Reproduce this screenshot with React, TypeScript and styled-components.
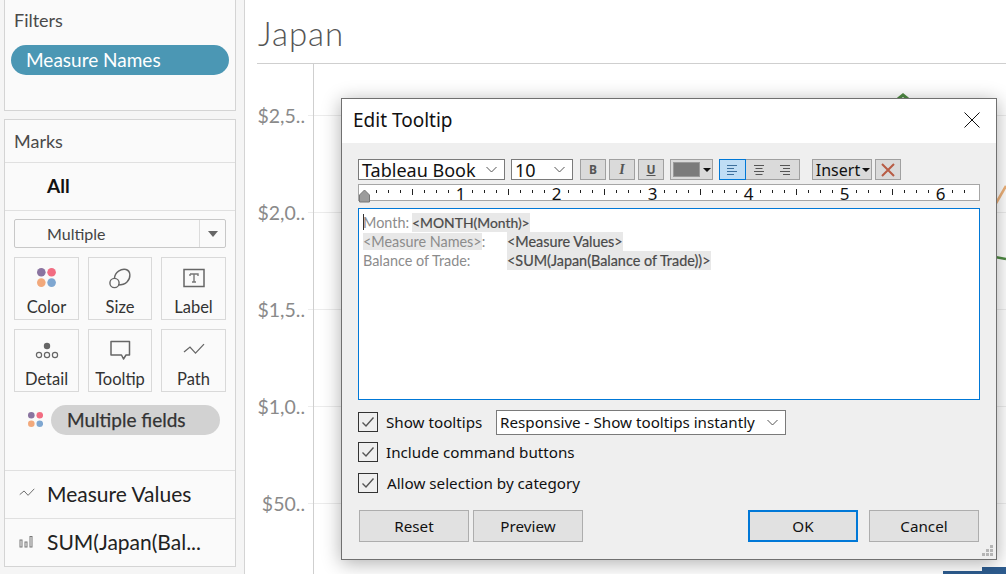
import React from 'react';
import styled, { createGlobalStyle } from 'styled-components';

const Global = createGlobalStyle`
  html, body {
    margin: 0;
    width: 1006px;
    height: 574px;
    overflow: hidden;
    background: #fff;
  }
  * { box-sizing: border-box; }
`;

const SANS = `Lato, 'Open Sans', sans-serif`;
const UI = `'Noto Sans', 'Open Sans', sans-serif`;

const Page = styled.div`
  position: relative;
  display: flex;
  width: 1006px;
  height: 574px;
  overflow: hidden;
  font-family: ${SANS};
`;

const Sidebar = styled.aside`
  width: 245px;
  flex: none;
  display: flex;
  flex-direction: column;
  gap: 8px;
  padding: 0 8px 0 4px;
  background: #f5f5f5;
  border-right: 1px solid #d4d4d4;
`;

const Card = styled.section<{ $height: number }>`
  height: ${p => p.$height}px;
  flex: none;
  display: flex;
  flex-direction: column;
  background: #fafafa;
  border: 1px solid #d4d4d4;
`;

const FilterCard = styled(Card)`
  margin-top: -1px;
  border-top: none;
  padding: 10px 6px 0 6px;
`;

const CardTitle = styled.div`
  font-size: 18px;
  line-height: 22px;
  color: #4a4a4a;
`;

const FilterTitle = styled(CardTitle)`
  padding-left: 3px;
  margin-bottom: 14px;
`;

const FilterPill = styled.div`
  height: 30px;
  border-radius: 15px;
  background: #4b97b4;
  color: #fff;
  font-size: 19px;
  line-height: 30px;
  padding-left: 15px;
`;

const MarksHeader = styled.div`
  height: 43px;
  padding: 10px 0 0 9px;
  border-bottom: 1px solid #e0e0e0;
`;

const AllRow = styled.div`
  height: 48px;
  padding-left: 42px;
  border-bottom: 1px solid #e0e0e0;
  font-size: 19px;
  font-weight: 700;
  line-height: 46px;
  color: #111;
`;

const MarkSelect = styled.div`
  display: flex;
  height: 29px;
  margin: 8px 9px 9px 9px;
  background: #fafafa;
  border: 1px solid #c8c8c8;
  border-radius: 2px;
`;

const MarkSelectText = styled.div`
  flex: 1;
  padding-left: 32px;
  font-size: 16px;
  line-height: 27px;
  color: #444;
`;

const MarkSelectArrow = styled.div`
  width: 26px;
  display: flex;
  align-items: center;
  justify-content: center;
  border-left: 1px solid #dcdcdc;

  &::after {
    content: '';
    border-left: 5px solid transparent;
    border-right: 5px solid transparent;
    border-top: 6px solid #666;
  }
`;

const TileGrid = styled.div`
  display: grid;
  grid-template-columns: 65px 64px 65px;
  grid-auto-rows: 63px;
  column-gap: 9px;
  row-gap: 9px;
  margin-left: 9px;
`;

const Tile = styled.div`
  display: flex;
  flex-direction: column;
  align-items: center;
  border: 1px solid #d9d9d9;
  color: #333;
  font-size: 16.5px;
`;

const TileIcon = styled.div<{ $top: number }>`
  height: 38px;
  padding-top: ${p => p.$top}px;
  display: flex;
  justify-content: center;
`;

const TileLabel = styled.div`
  line-height: 22px;
`;

const FieldRow = styled.div`
  display: flex;
  align-items: center;
  height: 30px;
  margin: 13px 0 35px 0;
`;

const FieldDots = styled.div`
  width: 46px;
  padding-left: 23px;
  display: flex;
`;

const FieldPill = styled.div`
  width: 169px;
  height: 30px;
  border-radius: 15px;
  background: #d2d2d2;
  color: #333;
  font-size: 19px;
  line-height: 30px;
  padding-left: 16px;
  -webkit-text-stroke: 0.25px #333;
`;

const EncodingRow = styled.div`
  display: flex;
  align-items: center;
  height: 48px;
  padding-bottom: 3px;
  border-top: 1px solid #e0e0e0;
  color: #222;
  font-size: 21px;
  white-space: nowrap;
`;

const EncodingIcon = styled.div`
  width: 42px;
  padding-left: 14px;
  display: flex;
`;

const ChartArea = styled.main`
  position: relative;
  flex: 1;
  padding-left: 12px;
  display: flex;
  flex-direction: column;
  background: #fff;
`;

const ChartTitle = styled.h1`
  margin: 0;
  height: 64px;
  flex: none;
  padding-left: 1px;
  border-bottom: 1px solid #cfcfcf;
  font-size: 33px;
  font-weight: 300;
  line-height: 67px;
  letter-spacing: 1px;
  color: #555;
`;

const Plot = styled.div`
  flex: 1;
  display: flex;
`;

const Axis = styled.div`
  width: 57px;
  flex: none;
  padding-top: 3px;
  border-right: 1px solid #cfcfcf;
`;

const AxisRow = styled.div`
  position: relative;
  height: 97px;
  display: flex;
  align-items: center;
  justify-content: flex-end;
  padding-right: 8px;
  color: #8a8a8a;
  font-size: 19.5px;

  &::after {
    content: '';
    position: absolute;
    right: 0;
    top: 48px;
    width: 5px;
    border-top: 1px solid #ececec;
  }
`;

const PlotBody = styled.div`
  flex: 1;
  padding-top: 51px;
`;

const GridLine = styled.div`
  height: 97px;
  border-top: 1px solid #ececec;
`;

const MarksOverlay = styled.svg`
  position: absolute;
  right: 0;
  top: 0;
`;

const Dialog = styled.div`
  position: absolute;
  left: 341px;
  top: 98px;
  width: 656px;
  height: 462px;
  display: flex;
  flex-direction: column;
  background: #efefef;
  border: 1px solid #707070;
  box-shadow: 0 3px 18px rgba(0, 0, 0, 0.32);
  font-family: ${UI};
  color: #111;
`;

const DialogHeader = styled.header`
  height: 44px;
  flex: none;
  display: flex;
  align-items: center;
  justify-content: space-between;
  padding: 0 16px 2px 11px;
  background: #fff;
  font-size: 19px;
`;

const DialogBody = styled.div`
  flex: 1;
  padding: 16px 16px 0 16px;
  display: flex;
  flex-direction: column;
`;

const Toolbar = styled.div`
  display: flex;
  height: 21px;
`;

const ComboBox = styled.div<{ $width: number; $gap?: number; $size?: number }>`
  width: ${p => p.$width}px;
  height: ${p => (p.$size ? 25 : 21)}px;
  margin-right: ${p => p.$gap || 0}px;
  display: flex;
  align-items: center;
  justify-content: space-between;
  padding: 0 7px 0 3px;
  background: #fff;
  border: 1px solid #7a7a7a;
  font-size: ${p => p.$size || 18}px;
  white-space: nowrap;
`;

const ToolButton = styled.div<{ $width?: number; $gap?: number }>`
  width: ${p => p.$width || 26}px;
  height: 21px;
  margin-right: ${p => p.$gap || 0}px;
  display: flex;
  align-items: center;
  justify-content: center;
  background: #dadada;
  border: 1px solid #a0a0a0;
  color: #555;
  font-size: 12px;
  font-weight: 700;
`;

const ItalicMark = styled.span`
  font-family: 'Liberation Serif', serif;
  font-style: italic;
  font-size: 14px;
`;

const UnderlineMark = styled.span`
  text-decoration: underline;
`;

const ColorButton = styled(ToolButton)`
  justify-content: flex-start;
  gap: 3px;
  padding-left: 2px;
`;

const Swatch = styled.span`
  width: 27px;
  height: 15px;
  background: #7b7b7b;
  border: 1px solid #9a9a9a;
`;

const Caret = styled.span`
  border-left: 4px solid transparent;
  border-right: 4px solid transparent;
  border-top: 4px solid #111;
`;

const AlignGroup = styled.div`
  display: flex;
  width: 81px;
  height: 21px;
  margin-right: 12px;
  background: #dadada;
  border: 1px solid #a0a0a0;
`;

const AlignCell = styled.div<{ $active?: boolean }>`
  flex: 1;
  display: flex;
  align-items: center;
  justify-content: center;
  margin: -1px 0;
  background: ${p => (p.$active ? '#bfddf5' : 'transparent')};
  border: 1px solid ${p => (p.$active ? '#0078d7' : 'transparent')};

  &:first-child {
    margin-left: -1px;
  }
`;

const InsertButton = styled(ToolButton)`
  gap: 2px;
  padding-left: 2px;
  color: #111;
  font-size: 16px;
  font-weight: 400;
`;

const RulerBox = styled.div`
  width: 622px;
  height: 17px;
  margin-top: 4px;
  background: #fff;
  border: 1px solid #a6a6a6;
`;

const RulerSvg = styled.svg`
  display: block;
  overflow: visible;
`;

const RulerNumber = styled.text`
  font-family: ${UI};
  font-size: 17px;
  fill: #111;
  text-anchor: middle;
`;

const Editor = styled.div`
  width: 622px;
  height: 192px;
  margin-top: 7px;
  padding: 4px 4px;
  background: #fff;
  border: 1px solid #0078d7;
  font-family: ${SANS};
  font-size: 14.4px;
  line-height: 19px;
  color: #8c8c8c;
`;

const EditorRow = styled.div`
  position: relative;
  display: flex;
  height: 19px;
  white-space: nowrap;
`;

const Cursor = styled.span`
  position: absolute;
  left: 0;
  top: 1px;
  width: 1px;
  height: 16px;
  background: #333;
`;

const EditorLabel = styled.span`
  width: 144px;
  flex: none;
`;

const Highlight = styled.span`
  background: #e8e8e8;
`;

const Token = styled.span`
  background: #e8e8e8;
  color: #4a4a4a;
  -webkit-text-stroke: 0.2px #4a4a4a;
`;

const FirstToken = styled(Token)`
  margin-left: 3px;
  font-size: 13.9px;
`;

const OptionRow = styled.label<{ $top: number }>`
  display: flex;
  align-items: center;
  height: 20px;
  margin-top: ${p => p.$top}px;
  font-size: 15.2px;
`;

const OptionText = styled.span`
  width: 110px;
  flex: none;
  white-space: nowrap;
`;

const CheckBox = styled.span<{ $gap: number }>`
  width: 20px;
  height: 20px;
  flex: none;
  margin-right: ${p => p.$gap}px;
  display: flex;
  align-items: center;
  justify-content: center;
  border: 1px solid #333;
`;

const ButtonRow = styled.div`
  display: flex;
  margin-top: 17px;
  padding-left: 1px;
`;

const DialogButton = styled.div<{ $primary?: boolean; $gap?: number }>`
  width: 110px;
  height: 32px;
  margin-right: ${p => p.$gap || 0}px;
  display: flex;
  align-items: center;
  justify-content: center;
  background: #e1e1e1;
  border: ${p => (p.$primary ? '2px solid #0078d7' : '1px solid #adadad')};
  font-size: 15.2px;
`;

const Grip = styled.svg`
  position: absolute;
  right: 3px;
  bottom: 3px;
`;

const ColorDots = ({ r, gap }: { r: number; gap: number }) => {
  const a = r;
  const b = r + gap;
  return (
    <svg width={b + r} height={b + r}>
      <circle cx={a} cy={a} r={r} fill="#8a74a0" />
      <circle cx={b} cy={a} r={r} fill="#f26d82" />
      <circle cx={a} cy={b} r={r} fill="#f2a97c" />
      <circle cx={b} cy={b} r={r} fill="#7fa7d1" />
    </svg>
  );
};

const SizeIcon = () => (
  <svg width="24" height="24" fill="none" stroke="#666" strokeWidth="1.4">
    <path d="M6.5 11 C7 5 13 1.5 18 2.5 C23 4 23 11 19 15 C16.5 17.5 13 18 10 18" />
    <circle cx="6.5" cy="16" r="4.6" />
  </svg>
);

const LabelIcon = () => (
  <svg width="22" height="20">
    <rect x="1" y="1.5" width="20" height="17" fill="none" stroke="#666" strokeWidth="1.5" />
    <path d="M7 6 H15 V8 M7 6 V8 M11 6 V14 M9 14 H13" fill="none" stroke="#777" strokeWidth="1.4" />
  </svg>
);

const DetailIcon = () => (
  <svg width="26" height="22" fill="none" stroke="#666" strokeWidth="1.2">
    <circle cx="13" cy="6" r="3.2" fill="#666" stroke="none" />
    <circle cx="5" cy="15" r="2.6" />
    <circle cx="13" cy="15" r="2.6" />
    <circle cx="21" cy="15" r="2.6" />
  </svg>
);

const TooltipIcon = () => (
  <svg width="22" height="22" fill="none" stroke="#666" strokeWidth="1.5">
    <path d="M2 1.5 H20.5 V15 H17 L14.5 19 L12.5 15 H2 Z" strokeLinejoin="round" />
  </svg>
);

const PathIcon = ({ size = 22 }: { size?: number }) => (
  <svg width={size} height={size * 0.6} viewBox="0 0 22 13" fill="none" stroke="#666" strokeWidth="1.3">
    <path d="M1 9 L7 4 L12.5 10 L21 1" />
  </svg>
);

const BarIcon = () => (
  <svg width="14" height="13" fill="none" stroke="#777" strokeWidth="1">
    <rect x="1" y="5" width="2" height="7" />
    <rect x="6" y="7" width="2" height="5" />
    <rect x="11" y="1.5" width="2" height="10.5" />
  </svg>
);

const ChevronDown = () => (
  <svg width="11" height="7" viewBox="0 0 11 7" fill="none" stroke="#555" strokeWidth="1">
    <path d="M0.5 1 L5.5 6 L10.5 1" />
  </svg>
);

const AlignIcon = ({ mode }: { mode: 'left' | 'center' | 'right' }) => {
  const lengths = [10, 7, 10, 7];
  return (
    <svg width="11" height="10" stroke={mode === 'left' ? '#3d6f9c' : '#555'} strokeWidth="1">
      {lengths.map((len, i) => {
        const offset = mode === 'left' ? 0 : mode === 'right' ? 10 - len : (10 - len) / 2;
        return <path key={i} d={`M${offset} ${i * 3 + 0.5} h${len}`} />;
      })}
    </svg>
  );
};

const CheckMark = () => (
  <svg width="14" height="12" fill="none" stroke="#555" strokeWidth="1.4">
    <path d="M1.5 6.5 L5 10 L12.5 1.5" />
  </svg>
);

const Ruler = () => {
  const ticks = [];
  for (let i = 0; i < 51; i++) {
    const x = 5.5 + i * 12;
    if (i % 8 === 0) continue;
    if (i % 8 === 4) ticks.push(<path key={i} d={`M${x} 4 v6`} stroke="#222" />);
    else ticks.push(<path key={i} d={`M${x} 5 v3`} stroke="#222" />);
  }
  return (
    <RulerSvg width="620" height="15">
      {ticks}
      {[1, 2, 3, 4, 5, 6].map(n => (
        <RulerNumber key={n} x={5.5 + n * 96} y="15">
          {n}
        </RulerNumber>
      ))}
      <path d="M0.5 10 L5.5 5 L10.5 10 V17 H0.5 Z" fill="#9c9c9c" stroke="#777" />
    </RulerSvg>
  );
};

const AXIS_LABELS = ['$2,5..', '$2,0..', '$1,5..', '$1,0..', '$50..'];

const TILES: { label: string; top: number; icon: React.ReactNode }[] = [
  { label: 'Color', top: 10, icon: <ColorDots r={4.3} gap={10.3} /> },
  { label: 'Size', top: 9, icon: <SizeIcon /> },
  { label: 'Label', top: 10, icon: <LabelIcon /> },
  { label: 'Detail', top: 10, icon: <DetailIcon /> },
  { label: 'Tooltip', top: 10, icon: <TooltipIcon /> },
  { label: 'Path', top: 13, icon: <PathIcon /> },
];

const App = () => (
  <Page>
    <Global />
    <Sidebar>
      <FilterCard $height={112}>
        <FilterTitle>Filters</FilterTitle>
        <FilterPill>Measure Names</FilterPill>
      </FilterCard>
      <Card $height={448}>
        <MarksHeader>
          <CardTitle>Marks</CardTitle>
        </MarksHeader>
        <AllRow>All</AllRow>
        <MarkSelect>
          <MarkSelectText>Multiple</MarkSelectText>
          <MarkSelectArrow />
        </MarkSelect>
        <TileGrid>
          {TILES.map(t => (
            <Tile key={t.label}>
              <TileIcon $top={t.top}>{t.icon}</TileIcon>
              <TileLabel>{t.label}</TileLabel>
            </Tile>
          ))}
        </TileGrid>
        <FieldRow>
          <FieldDots>
            <ColorDots r={3.3} gap={8.5} />
          </FieldDots>
          <FieldPill>Multiple fields</FieldPill>
        </FieldRow>
        <EncodingRow>
          <EncodingIcon>
            <PathIcon size={16} />
          </EncodingIcon>
          Measure Values
        </EncodingRow>
        <EncodingRow>
          <EncodingIcon>
            <BarIcon />
          </EncodingIcon>
          SUM(Japan(Bal...
        </EncodingRow>
      </Card>
    </Sidebar>

    <ChartArea>
      <ChartTitle>Japan</ChartTitle>
      <Plot>
        <Axis>
          {AXIS_LABELS.map(label => (
            <AxisRow key={label}>{label}</AxisRow>
          ))}
        </Axis>
        <PlotBody>
          {AXIS_LABELS.map(label => (
            <GridLine key={label} />
          ))}
        </PlotBody>
      </Plot>
      <MarksOverlay width="761" height="574">
        <path d="M653 99 L658 95 L663 99" fill="none" stroke="#4f8a44" strokeWidth="3" />
        <path d="M750 205 L761 186" fill="none" stroke="#eeb27a" strokeWidth="2.5" />
        <path d="M750 257 L761 259" fill="none" stroke="#4f8a44" strokeWidth="2.5" />
        <rect x="698" y="571" width="63" height="3" fill="#2d5c8f" />
        <rect x="737" y="567" width="24" height="7" fill="#2d5c8f" />
      </MarksOverlay>
    </ChartArea>

    <Dialog>
      <DialogHeader>
        Edit Tooltip
        <svg width="16" height="16" fill="none" stroke="#111" strokeWidth="1">
          <path d="M0.5 0.5 L15.5 15.5 M15.5 0.5 L0.5 15.5" />
        </svg>
      </DialogHeader>
      <DialogBody>
        <Toolbar>
          <ComboBox $width={147} $gap={6}>
            Tableau Book
            <ChevronDown />
          </ComboBox>
          <ComboBox $width={62} $gap={7}>
            10
            <ChevronDown />
          </ComboBox>
          <ToolButton $gap={3}>B</ToolButton>
          <ToolButton $gap={3}>
            <ItalicMark>I</ItalicMark>
          </ToolButton>
          <ToolButton $gap={6}>
            <UnderlineMark>U</UnderlineMark>
          </ToolButton>
          <ColorButton $width={43} $gap={6}>
            <Swatch />
            <Caret />
          </ColorButton>
          <AlignGroup>
            <AlignCell $active>
              <AlignIcon mode="left" />
            </AlignCell>
            <AlignCell>
              <AlignIcon mode="center" />
            </AlignCell>
            <AlignCell>
              <AlignIcon mode="right" />
            </AlignCell>
          </AlignGroup>
          <InsertButton $width={60} $gap={3}>
            Insert
            <Caret />
          </InsertButton>
          <ToolButton>
            <svg width="14" height="14" fill="none" stroke="#b85c45" strokeWidth="2">
              <path d="M1 1 L13 13 M13 1 L1 13" />
            </svg>
          </ToolButton>
        </Toolbar>
        <RulerBox>
          <Ruler />
        </RulerBox>
        <Editor>
          <EditorRow>
            <Cursor />
            Month:
            <FirstToken>&lt;MONTH(Month)&gt;</FirstToken>
          </EditorRow>
          <EditorRow>
            <EditorLabel>
              <Highlight>&lt;Measure Names&gt;</Highlight>:
            </EditorLabel>
            <Token>&lt;Measure Values&gt;</Token>
          </EditorRow>
          <EditorRow>
            <EditorLabel>Balance of Trade:</EditorLabel>
            <Token>&lt;SUM(Japan(Balance of Trade))&gt;</Token>
          </EditorRow>
        </Editor>
        <OptionRow $top={12}>
          <CheckBox $gap={8}>
            <CheckMark />
          </CheckBox>
          <OptionText>Show tooltips</OptionText>
          <ComboBox $width={290} $size={15.2}>
            Responsive - Show tooltips instantly
            <ChevronDown />
          </ComboBox>
        </OptionRow>
        <OptionRow $top={10}>
          <CheckBox $gap={8}>
            <CheckMark />
          </CheckBox>
          Include command buttons
        </OptionRow>
        <OptionRow $top={11}>
          <CheckBox $gap={9}>
            <CheckMark />
          </CheckBox>
          Allow selection by category
        </OptionRow>
        <ButtonRow>
          <DialogButton $gap={4}>Reset</DialogButton>
          <DialogButton $gap={165}>Preview</DialogButton>
          <DialogButton $primary $gap={11}>
            OK
          </DialogButton>
          <DialogButton>Cancel</DialogButton>
        </ButtonRow>
      </DialogBody>
      <Grip width="11" height="11" fill="#b5b5b5">
        <rect x="8" y="0" width="3" height="3" />
        <rect x="4" y="4" width="3" height="3" />
        <rect x="8" y="4" width="3" height="3" />
        <rect x="0" y="8" width="3" height="3" />
        <rect x="4" y="8" width="3" height="3" />
        <rect x="8" y="8" width="3" height="3" />
      </Grip>
    </Dialog>
  </Page>
);

export default App;
